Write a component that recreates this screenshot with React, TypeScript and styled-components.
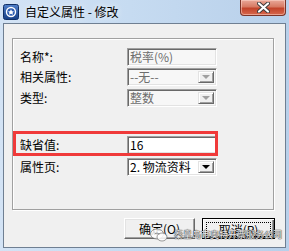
import styled, { createGlobalStyle } from "styled-components";

const GlobalStyle = createGlobalStyle`
  html, body {
    margin: 0;
    padding: 0;
  }
  body {
    width: 289px;
    height: 251px;
    overflow: hidden;
    font-family: "Noto Sans CJK SC", "Noto Sans", sans-serif;
  }
`;

const campos = [
  { rotulo: "名称*:", valor: "税率(%)", tipo: "texto", ativo: false, topo: 9 },
  { rotulo: "相关属性:", valor: "--无--", tipo: "combo", ativo: false, topo: 2 },
  { rotulo: "类型:", valor: "整数", tipo: "combo", ativo: false, topo: 3 },
  { rotulo: "缺省值:", valor: "16", tipo: "texto", ativo: true, topo: 29, destaque: true },
  { rotulo: "属性页:", valor: "2. 物流资料", tipo: "combo", ativo: true, topo: 4 },
];

function IconeJanela() {
  return (
    <svg width="16" height="16" viewBox="0 0 16 16">
      <defs>
        <linearGradient id="ig" x1="0" y1="0" x2="0" y2="1">
          <stop offset="0" stopColor="#4f7fc9" />
          <stop offset="1" stopColor="#163f86" />
        </linearGradient>
      </defs>
      <rect x="0.5" y="0.5" width="15" height="15" rx="2" fill="url(#ig)" stroke="#0f2f66" />
      <circle cx="8" cy="8" r="5.2" fill="#ffffff" />
      <circle cx="8" cy="8" r="3.8" fill="#2a5bb0" />
      <path d="M8 5.2 L9 7.2 L11 7.4 L9.5 8.8 L10 10.8 L8 9.8 L6 10.8 L6.5 8.8 L5 7.4 L7 7.2 Z" fill="#ffffff" />
    </svg>
  );
}

function IconeMarca() {
  return (
    <svg width="18" height="14" viewBox="0 0 18 14">
      <ellipse cx="7" cy="6" rx="6.5" ry="5" fill="rgba(255,255,255,0.85)" stroke="rgba(90,90,90,0.6)" />
      <ellipse cx="12" cy="9" rx="5" ry="4" fill="rgba(255,255,255,0.85)" stroke="rgba(90,90,90,0.6)" />
      <path d="M4.5 6 q2.5 -2 5 0" stroke="rgba(90,90,90,0.6)" fill="none" />
    </svg>
  );
}

export default function App() {
  return (
    <>
      <GlobalStyle />
      <Janela>
        <BarraTitulo>
          <IconeJanela />
          <Titulo>自定义属性 - 修改</Titulo>
          <BotaoFechar>
            <svg width="13" height="11" viewBox="0 0 13 11">
              <path d="M2 1.5 L11 9.5 M11 1.5 L2 9.5" stroke="#3a3a3a" strokeWidth="4" strokeLinecap="round" />
              <path d="M2 1.5 L11 9.5 M11 1.5 L2 9.5" stroke="#ffffff" strokeWidth="2.2" strokeLinecap="round" />
            </svg>
          </BotaoFechar>
        </BarraTitulo>
        <AreaCliente>
          <Grupo>
            {campos.map((campo) => (
              <Linha key={campo.rotulo} $topo={campo.topo}>
                <Rotulo>{campo.rotulo}</Rotulo>
                {campo.tipo === "texto" ? (
                  <CaixaTexto $ativo={campo.ativo}>{campo.valor}</CaixaTexto>
                ) : (
                  <Combo $ativo={campo.ativo}>
                    <ComboTexto>{campo.valor}</ComboTexto>
                    <BotaoSeta>
                      <Seta $ativo={campo.ativo} />
                    </BotaoSeta>
                  </Combo>
                )}
                {campo.destaque && <Marcacao />}
              </Linha>
            ))}
          </Grupo>
          <ContainerBotoes>
            <Botao>确定(O)</Botao>
            <BotaoPadrao>
              <Foco>取消(R)</Foco>
            </BotaoPadrao>
          </ContainerBotoes>
          <MarcaDagua>
            <IconeMarca />
            <TextoMarca>秦皇岛市奥特开票服务公司</TextoMarca>
          </MarcaDagua>
        </AreaCliente>
      </Janela>
    </>
  );
}

const Janela = styled.div`
  width: 289px;
  height: 251px;
  box-sizing: border-box;
  padding: 0 3px 3px 3px;
  display: flex;
  flex-direction: column;
  background: linear-gradient(90deg, #d3e3f5 0%, #c6dbf1 45%, #b8d0ea 100%);
`;

const BarraTitulo = styled.div`
  height: 23px;
  display: flex;
  align-items: center;
  gap: 6px;
  flex-shrink: 0;
`;

const Titulo = styled.span`
  font-size: 12px;
  line-height: 16px;
  color: #000;
  text-shadow: 0 0 6px rgba(255, 255, 255, 0.9);
`;

const BotaoFechar = styled.div`
  margin-left: auto;
  align-self: flex-start;
  width: 46px;
  height: 16px;
  box-sizing: border-box;
  border: 1px solid #7b3428;
  border-top: none;
  border-radius: 0 0 4px 4px;
  background: linear-gradient(180deg, #e9a899 0%, #d77a63 45%, #c2432a 55%, #d7684d 100%);
  box-shadow: inset 0 0 0 1px rgba(255, 220, 210, 0.5);
  display: flex;
  align-items: center;
  justify-content: center;
`;

const AreaCliente = styled.div`
  position: relative;
  flex: 1;
  background: #f0f0f0;
  border: 1px solid #6f7f92;
  display: flex;
  flex-direction: column;
`;

const Grupo = styled.div`
  margin: 14px 11px 0 8px;
  height: 172px;
  box-sizing: border-box;
  border: 1px solid #a0a0a0;
  box-shadow: inset 1px 1px #ffffff, 1px 1px #ffffff;
  display: flex;
  flex-direction: column;
`;

const Linha = styled.div<{ $topo: number }>`
  position: relative;
  display: flex;
  align-items: center;
  margin-top: ${(p) => p.$topo}px;
  padding-left: 7px;
`;

const Rotulo = styled.span`
  width: 107px;
  font-size: 12px;
  line-height: 14px;
  color: #000;
`;

const campoBase = `
  width: 90px;
  height: 18px;
  box-sizing: border-box;
  border: 1px solid;
  border-color: #a0a0a0 #ffffff #ffffff #a0a0a0;
  box-shadow: inset 1px 1px #696969, inset -1px -1px #e3e3e3;
  font-size: 12px;
  line-height: 14px;
`;

const CaixaTexto = styled.div<{ $ativo: boolean }>`
  ${campoBase}
  padding: 1px 2px;
  background: ${(p) => (p.$ativo ? "#ffffff" : "#f7f7f7")};
  color: ${(p) => (p.$ativo ? "#000" : "#6d6d6d")};
`;

const Combo = styled.div<{ $ativo: boolean }>`
  ${campoBase}
  padding: 2px;
  display: flex;
  align-items: stretch;
  background: ${(p) => (p.$ativo ? "#ffffff" : "#f7f7f7")};
  color: ${(p) => (p.$ativo ? "#000" : "#6d6d6d")};
`;

const ComboTexto = styled.span`
  flex: 1;
  margin-top: -1px;
  white-space: nowrap;
`;

const BotaoSeta = styled.div`
  width: 16px;
  box-sizing: border-box;
  background: #f0f0f0;
  border: 1px solid;
  border-color: #e3e3e3 #696969 #696969 #e3e3e3;
  box-shadow: inset 1px 1px #ffffff, inset -1px -1px #a0a0a0;
  display: flex;
  align-items: center;
  justify-content: center;
`;

const Seta = styled.div<{ $ativo: boolean }>`
  width: 0;
  height: 0;
  border-left: 4px solid transparent;
  border-right: 4px solid transparent;
  border-top: 4px solid ${(p) => (p.$ativo ? "#000" : "#a0a0a0")};
`;

const Marcacao = styled.div`
  position: absolute;
  left: 0;
  top: -5px;
  width: 205px;
  height: 25px;
  box-sizing: border-box;
  border: 3px solid #f03a3a;
`;

const ContainerBotoes = styled.div`
  display: flex;
  justify-content: flex-end;
  gap: 7px;
  margin-top: 8px;
  padding-right: 10px;
`;

const Botao = styled.div`
  width: 71px;
  height: 21px;
  box-sizing: border-box;
  background: #f0f0f0;
  border: 1px solid;
  border-color: #ffffff #696969 #696969 #ffffff;
  box-shadow: inset -1px -1px #a0a0a0, inset 1px 1px #e3e3e3;
  font-size: 12px;
  line-height: 19px;
  text-align: center;
  color: #000;
`;

const BotaoPadrao = styled(Botao)`
  width: 73px;
  border: 1px solid #000;
  box-shadow: inset 1px 1px #ffffff, inset -1px -1px #696969, inset -2px -2px #a0a0a0;
  padding: 3px;
  line-height: 13px;
`;

const Foco = styled.div`
  height: 13px;
  border: 1px dotted #000;
  line-height: 13px;
`;

const MarcaDagua = styled.div`
  position: absolute;
  left: 146px;
  top: 204px;
  display: flex;
  align-items: center;
  gap: 6px;
  white-space: nowrap;
`;

const TextoMarca = styled.span`
  font-size: 9px;
  line-height: 12px;
  color: rgba(255, 255, 255, 0.92);
  text-shadow: 0 0 1px #3c3c3c, 0 0 1px #3c3c3c, 0 0 1px #3c3c3c;
`;
